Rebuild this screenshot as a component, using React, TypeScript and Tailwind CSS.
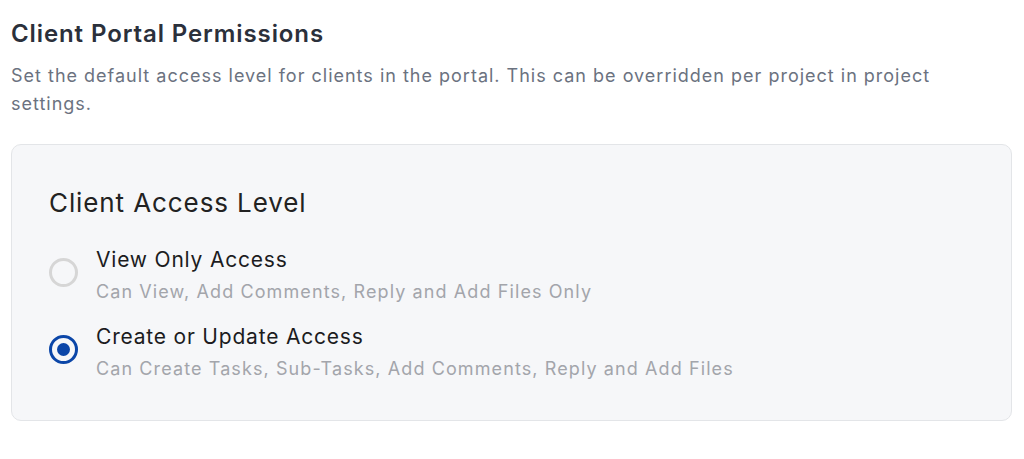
import React, { useState } from "react";

const options = [
  { id: "view", label: "View Only Access", desc: "Can View, Add Comments, Reply and Add Files Only" },
  { id: "edit", label: "Create or Update Access", desc: "Can Create Tasks, Sub-Tasks, Add Comments, Reply and Add Files" },
];

export default function App() {
  const [sel, setSel] = useState("edit");
  return (
    <div className="min-h-[459px] bg-white px-[11px] pt-[18px] font-['Inter',sans-serif]">
      <h1 className="text-[24px] leading-[32px] font-semibold tracking-[0.9px] text-[#2b303b]">Client Portal Permissions</h1>
      <p className="mt-[12px] pr-[60px] text-[18px] leading-[28px] tracking-[1px] text-[#6b7280]">
        Set the default access level for clients in the portal. This can be overridden per project in project settings.
      </p>
      <div className="mt-[26px] w-[1001px] rounded-[10px] border border-[#e3e5e8] bg-[#f6f7f9] pl-[37px] pt-[40px] pb-[35px]">
        <h2 className="text-[26px] leading-[36px] font-normal tracking-[0.9px] text-[#222222]">Client Access Level</h2>
        <div className="mt-[23px] flex flex-col gap-[13px]">
          {options.map((o) => {
            const on = sel === o.id;
            return (
              <label key={o.id} className="flex items-start gap-[18px] cursor-pointer" onClick={() => setSel(o.id)}>
                <span
                  className={
                    on
                      ? "mt-[14px] flex h-[29px] w-[29px] shrink-0 items-center justify-center rounded-full border-[3px] border-[#0b46a8]"
                      : "mt-[14px] flex h-[29px] w-[29px] shrink-0 items-center justify-center rounded-full border-[3px] border-[#d6d6d6]"
                  }
                >
                  {on && <span className="h-[13px] w-[13px] rounded-full bg-[#0b46a8]" />}
                </span>
                <span className="flex flex-col">
                  <span className="text-[21px] leading-[32px] tracking-[0.8px] text-[#1c1c1e]">{o.label}</span>
                  <span className="text-[18px] leading-[32px] tracking-[1.1px] text-[#a3a5ab]">{o.desc}</span>
                </span>
              </label>
            );
          })}
        </div>
      </div>
    </div>
  );
}
